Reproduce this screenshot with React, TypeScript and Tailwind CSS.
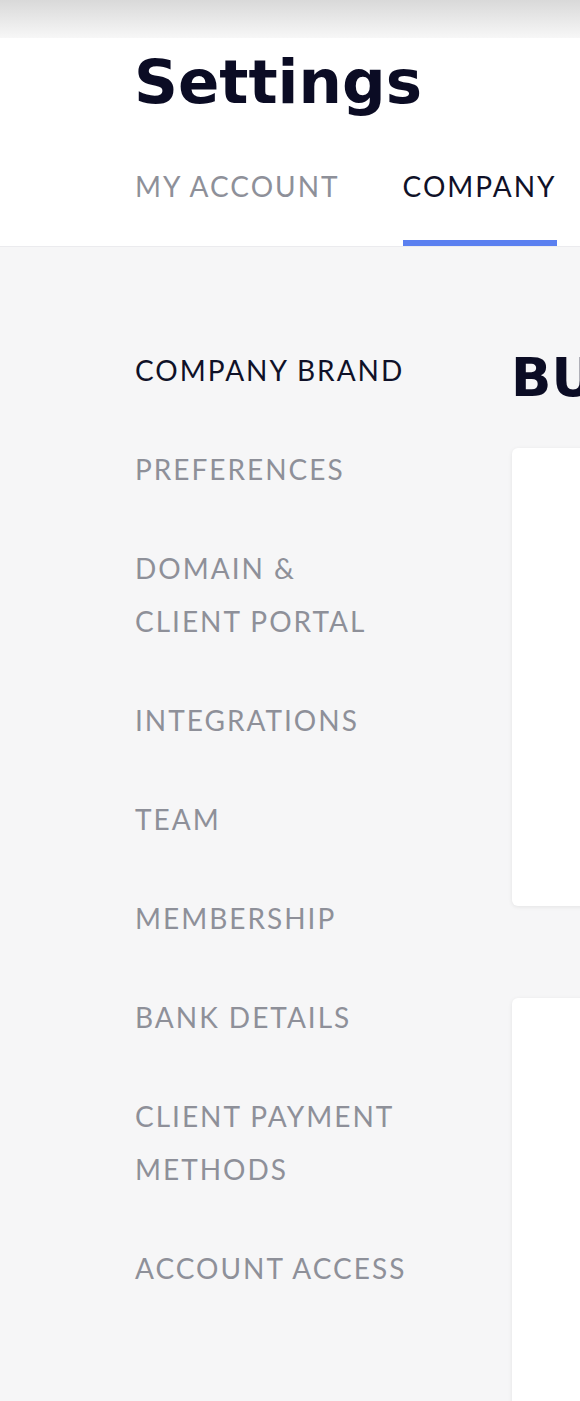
import React from 'react';

const menu: string[][] = [
  ['COMPANY BRAND'],
  ['PREFERENCES'],
  ['DOMAIN &', 'CLIENT PORTAL'],
  ['INTEGRATIONS'],
  ['TEAM'],
  ['MEMBERSHIP'],
  ['BANK DETAILS'],
  ['CLIENT PAYMENT', 'METHODS'],
  ['ACCOUNT ACCESS'],
];

const App: React.FC = () => {
  return (
    <div className="w-[580px] h-[1401px] overflow-hidden bg-[#f6f6f7] font-['Lato',sans-serif]">
      <div className="h-[38px] bg-gradient-to-b from-[#d9d9d9] to-[#f7f7f7]" />

      <div className="bg-white border-b border-[#ebebee] pl-[135px] h-[209px] flex flex-col">
        <h1 className="mt-[8px] -ml-[1px] font-['DejaVu_Sans',sans-serif] text-[61px] leading-[72px] font-bold text-[#0b0c24]">
          Settings
        </h1>
        <div className="mt-auto flex gap-[63px] text-[28px] leading-[28px] tracking-[2px]">
          <div className="pb-[46px] text-[#8e9099]">MY ACCOUNT</div>
          <div className="pb-[40px] text-[#0f1128] border-b-[6px] border-[#5b80f0]">COMPANY</div>
        </div>
      </div>

      <div className="flex">
        <nav className="w-[512px] shrink-0 pl-[135px] pt-[97px] flex flex-col gap-[46px] text-[28px] leading-[53px] tracking-[2px]">
          {menu.map((lines, i) => (
            <div key={i} className={i === 0 ? 'text-[#0f1128]' : 'text-[#8e9099]'}>
              {lines.map(l => (
                <div key={l} className="whitespace-nowrap">{l}</div>
              ))}
            </div>
          ))}
        </nav>

        <div className="shrink-0 w-[600px] pt-[101px]">
          <h2 className="-ml-[1px] font-['DejaVu_Sans',sans-serif] text-[53px] leading-[60px] font-bold text-[#0b0c24] whitespace-nowrap">
            BUSINESS INFO
          </h2>
          <div className="mt-[40px] h-[458px] bg-white rounded-[6px] shadow-[0_1px_4px_rgba(0,0,0,0.08)]" />
          <div className="mt-[92px] h-[500px] bg-white rounded-[6px] shadow-[0_1px_4px_rgba(0,0,0,0.08)]" />
        </div>
      </div>
    </div>
  );
};

export default App;
